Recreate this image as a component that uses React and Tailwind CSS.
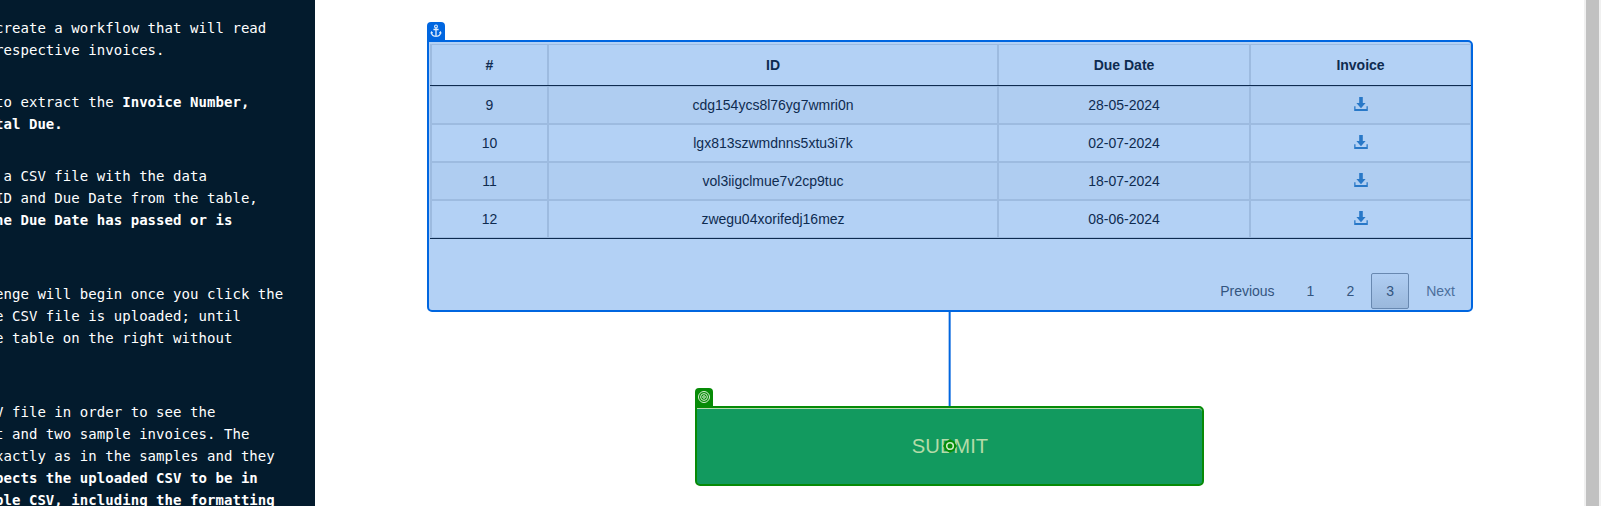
const PARAGRAPHS = [
  { gap: 'mb-[30px]', lines: [['create a workflow that will read'], ['respective invoices.']] },
  { gap: 'mb-[30px]', lines: [['to extract the ', 'Invoice Number,'], ['', 'tal Due.']] },
  {
    gap: 'mb-[52px]',
    lines: [[' a CSV file with the data'], ['ID and Due Date from the table,'], ['', 'he Due Date has passed or is']],
  },
  {
    gap: 'mb-[52px]',
    lines: [['enge will begin once you click the'], ['e CSV file is uploaded; until'], ['e table on the right without']],
  },
  {
    gap: 'mb-0',
    lines: [
      ['V file in order to see the'],
      ['t and two sample invoices. The'],
      ['xactly as in the samples and they'],
      ['', 'pects the uploaded CSV to be in'],
      ['', 'ble CSV, including the formatting'],
    ],
  },
];

const ROWS = [
  { n: '9', id: 'cdg154ycs8l76yg7wmri0n', due: '28-05-2024' },
  { n: '10', id: 'lgx813szwmdnns5xtu3i7k', due: '02-07-2024' },
  { n: '11', id: 'vol3iigclmue7v2cp9tuc', due: '18-07-2024' },
  { n: '12', id: 'zwegu04xorifedj16mez', due: '08-06-2024' },
];

function DownloadIcon() {
  return (
    <svg width="14" height="14" viewBox="0 0 14 14" fill="#2878c8" className="-mt-0.5">
      <path d="M5.2 0h3.6v6h2.8L7 11.2 2.4 6h2.8z" />
      <path d="M0.2 9.3h1.3v2.7h11V9.3h1.3V14H0.2z" />
    </svg>
  );
}

function AnchorIcon() {
  return (
    <svg width="12" height="14" viewBox="0 0 12 14" fill="none" stroke="#e4effc" strokeWidth="1.1" className="-ml-px">
      <circle cx="6" cy="2.4" r="1.4" />
      <path d="M6 3.8v8.6M3.4 5.5h5.2" strokeWidth="1.3" />
      <path d="M1.4 8v.8C1.8 11 3.8 12.3 6 12.3s4.2-1.3 4.6-3.5V8M0.8 9.4l0.7-1.4 1.2 1.1M11.2 9.4l-0.7-1.4-1.2 1.1" />
    </svg>
  );
}

function TargetIcon() {
  return (
    <svg width="12" height="12" viewBox="0 0 12 12" fill="none" stroke="#d8f0d4" strokeWidth="1">
      <circle cx="6" cy="6" r="5.5" />
      <circle cx="6" cy="6" r="3.4" />
      <circle cx="6" cy="6" r="1.3" />
    </svg>
  );
}

function Sidebar() {
  return (
    <aside className="w-[315px] shrink-0 overflow-hidden bg-[#031b2d] pt-[17px] font-['DejaVu_Sans_Mono',monospace] text-[14px] leading-[22px] tracking-[0.05px] text-white">
      <div className="-ml-[5px] whitespace-pre">
        {PARAGRAPHS.map((p, i) => (
          <div key={i} className={p.gap}>
            {p.lines.map(([plain, bold], j) => (
              <div key={j}>
                {plain}
                {bold && <b>{bold}</b>}
              </div>
            ))}
          </div>
        ))}
      </div>
    </aside>
  );
}

const GRID = 'grid grid-cols-[117px_450px_252px_222px]';
const CELL = 'flex items-center justify-center border-l-2 border-[#9dbbe0]';

function DataPanel() {
  return (
    <section className="h-[272px] w-[1046px] rounded-[5px] rounded-tl-none border-2 border-[#0066e0] bg-[#b3d1f5] pl-px pt-[2px] text-[14px] text-[#0e2b50]">
      <div className={`${GRID} h-[41px] w-[1041px] border-t border-[#9dbbe0] font-bold`}>
        <div className={CELL}>#</div>
        <div className={CELL}>ID</div>
        <div className={CELL}>Due Date</div>
        <div className={`${CELL} border-r`}>Invoice</div>
      </div>
      <div className="h-px w-[1041px] bg-[#0e2b50]" />
      <div className="h-px w-[1041px] bg-[#9dbbe0]" />
      {ROWS.map((row, i) => {
        const shade = i % 2 === 0 ? 'bg-[#afcdf1]' : '';
        const line = i < 3 ? 'h-[38px] border-b-2' : 'h-[37px] border-b';
        return (
          <div key={row.n} className={`${GRID} ${shade} ${line} w-[1041px] border-[#9dbbe0]`}>
            <div className={CELL}>{row.n}</div>
            <div className={CELL}>{row.id}</div>
            <div className={CELL}>{row.due}</div>
            <div className={`${CELL} border-r pl-px`}>
              <DownloadIcon />
            </div>
          </div>
        );
      })}
      <div className="h-px w-[1041px] bg-[#0e2b50]" />
      <nav className="mt-[34px] flex h-9 items-center justify-end pr-4 text-[#33557f]">
        <span className="mr-8">Previous</span>
        <span className="mr-8">1</span>
        <span className="mr-[17px]">2</span>
        <span className="flex h-9 w-[38px] items-center justify-center rounded-[2px] border border-[#6888b0] bg-linear-to-b from-[#b0cef3] to-[#9ab8dc]">
          3
        </span>
        <span className="ml-[17px] text-[#4c6f9c]">Next</span>
      </nav>
    </section>
  );
}

export default function App() {
  return (
    <div className="flex h-[506px] w-[1601px] overflow-hidden bg-white font-['Liberation_Sans',Arial,sans-serif]">
      <Sidebar />
      <main className="flex flex-1 flex-col pl-[112px] pt-[22px]">
        <div className="flex h-[18px] w-[18px] items-center justify-center rounded-t-[4px] bg-[#0066e0]">
          <AnchorIcon />
        </div>
        <DataPanel />
        <div className="flex h-[76px] w-[1045px] justify-center">
          <div className="h-[94px] w-[3px] shrink-0 border-x border-l-[#a6c8f3] border-r-[#5c9be9] bg-[#0066e0]" />
        </div>
        <div className="ml-[268px] flex h-[18px] w-[18px] items-center justify-center rounded-t-[4px] bg-[#078b07]">
          <TargetIcon />
        </div>
        <div className="relative ml-[268px] flex h-20 w-[509px] items-center justify-center rounded-[5px] rounded-tl-none border-2 border-[#078b07] bg-[#129a5f] pl-px text-[20.2px] text-[#b5dba8] shadow-[inset_0_1px_0_#b8dcae]">
          SUBMIT
          <svg width="14" height="14" viewBox="0 0 14 14" fill="none" className="absolute left-[246px] top-[31px]">
            <path d="M7 0 9.2 1.6 11.6 2.4 12.4 4.8 14 7 12.4 9.2 11.6 11.6 9.2 12.4 7 14 4.8 12.4 2.4 11.6 1.6 9.2 0 7 1.6 4.8 2.4 2.4 4.8 1.6z" fill="#078b07" />
            <circle cx="7" cy="7" r="3.3" stroke="#cdebc9" strokeWidth="1.6" />
          </svg>
        </div>
      </main>
      <div className="w-[17px] shrink-0 border-x-2 border-[#f0f0f0] bg-[#c1c1c1]" />
    </div>
  );
}
